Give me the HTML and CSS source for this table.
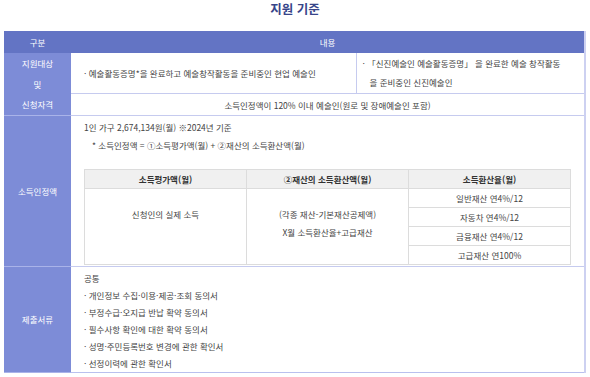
FILE: index.html
```html
<!DOCTYPE html>
<html lang="ko">
<head>
    <meta charset="UTF-8">
    <meta name="viewport" content="width=device-width, initial-scale=1.0">
    <title>지원 기준</title>
    <link rel="stylesheet" href="styles.css">
</head>
<body>
    <h2 class="title">지원 기준</h2>

    <table class="criteria">
        <colgroup>
            <col class="col_label">
            <col class="col_left">
            <col class="col_right">
        </colgroup>
        <thead>
            <tr>
                <th class="head">구분</th>
                <th class="head" colspan="2">내용</th>
            </tr>
        </thead>
        <tbody>
            <tr>
                <th class="label" rowspan="2">지원대상<br>및<br>신청자격</th>
                <td class="cell split">· 예술활동증명*을 완료하고 예술창작활동을 준비중인 현업 예술인</td>
                <td class="cell bullet">· 「신진예술인 예술활동증명」 을 완료한 예술 창작활동<br>을 준비중인 신진예술인</td>
            </tr>
            <tr>
                <td class="cell center" colspan="2">소득인정액이 120% 이내 예술인(원로 및 장애예술인 포함)</td>
            </tr>
            <tr>
                <th class="label">소득인정액</th>
                <td class="cell income" colspan="2">
                    <p class="line">1인 가구 2,674,134원(월) ※2024년 기준</p>
                    <p class="line note">* 소득인정액 = ①소득평가액(월) + ②재산의 소득환산액(월)</p>

                    <table class="inner">
                        <thead>
                            <tr>
                                <th>소득평가액(월)</th>
                                <th>②재산의 소득환산액(월)</th>
                                <th>소득환산율(월)</th>
                            </tr>
                        </thead>
                        <tbody>
                            <tr>
                                <td class="tall" rowspan="4">신청인의 실제 소득</td>
                                <td class="tall" rowspan="4">(각종 재산-기본재산공제액)<br>X월 소득환산율+고급재산</td>
                                <td>일반재산 연4%/12</td>
                            </tr>
                            <tr><td>자동차 연4%/12</td></tr>
                            <tr><td>금융재산 연4%/12</td></tr>
                            <tr><td>고급재산 연100%</td></tr>
                        </tbody>
                    </table>
                </td>
            </tr>
            <tr>
                <th class="label">제출서류</th>
                <td class="cell docs" colspan="2">
                    <p class="line">공통</p>
                    <p class="line">· 개인정보 수집·이용·제공·조회 동의서</p>
                    <p class="line">· 부정수급·오지급 반납 확약 동의서</p>
                    <p class="line">· 필수사항 확인에 대한 확약 동의서</p>
                    <p class="line">· 성명·주민등록번호 변경에 관한 확인서</p>
                    <p class="line">· 선정이력에 관한 확인서</p>
                </td>
            </tr>
        </tbody>
    </table>
</body>
</html>
```

FILE: styles.css
```css
body {
    margin: 0;
    padding: 0 4px;
    font-family: "Noto Sans CJK KR", "Noto Sans", sans-serif;
    font-size: 8.5px;
    color: #444;
    background: #fff;
}
.title {
    margin: 0 0 13px;
    line-height: 18px;
    font-size: 12.5px;
    font-weight: 700;
    text-align: center;
    color: #37458a;
}
.criteria {
    width: 582px;
    border-collapse: collapse;
    table-layout: fixed;
    border-right: 2px solid #cdd1f1;
}
.col_label {
    width: 67px;
}
.col_left {
    width: 285px;
}
.head {
    height: 22px;
    padding: 0;
    background-color: #6374c4;
    color: #fff;
    font-weight: 400;
}
.label {
    padding: 0;
    background-color: #7d8cd7;
    color: #fff;
    font-weight: 400;
    line-height: 20.5px;
    border-bottom: 1px solid #a9b3e9;
}
.cell {
    padding: 0 13px;
    border-bottom: 1px solid #c6cbef;
    vertical-align: middle;
}
.split {
    height: 40px;
    border-right: 1px solid #c6cbef;
    line-height: 19px;
}
.bullet {
    padding-left: 13px;
    text-indent: -7px;
    line-height: 19px;
}
.center {
    height: 21px;
    text-align: center;
}
.line {
    margin: 0;
}
.income {
    padding-top: 2px;
    padding-bottom: 1px;
    line-height: 18px;
    vertical-align: top;
}
.note {
    padding-left: 8px;
}
.inner {
    width: 100%;
    margin-top: 15px;
    border-collapse: collapse;
    table-layout: fixed;
    color: #444;
}
.inner th,
.inner td {
    height: 18px;
    padding: 0;
    border: 1px solid #dcdcdc;
    text-align: center;
    line-height: 18px;
}
.inner th {
    background-color: #f0f0f0;
    font-weight: 700;
    color: #333;
}
.inner .tall {
    vertical-align: top;
    padding-top: 16px;
}
.docs {
    padding-top: 3px;
    padding-bottom: 0;
    line-height: 17px;
    vertical-align: top;
    border-bottom-color: #b9c0ee;
}
```
